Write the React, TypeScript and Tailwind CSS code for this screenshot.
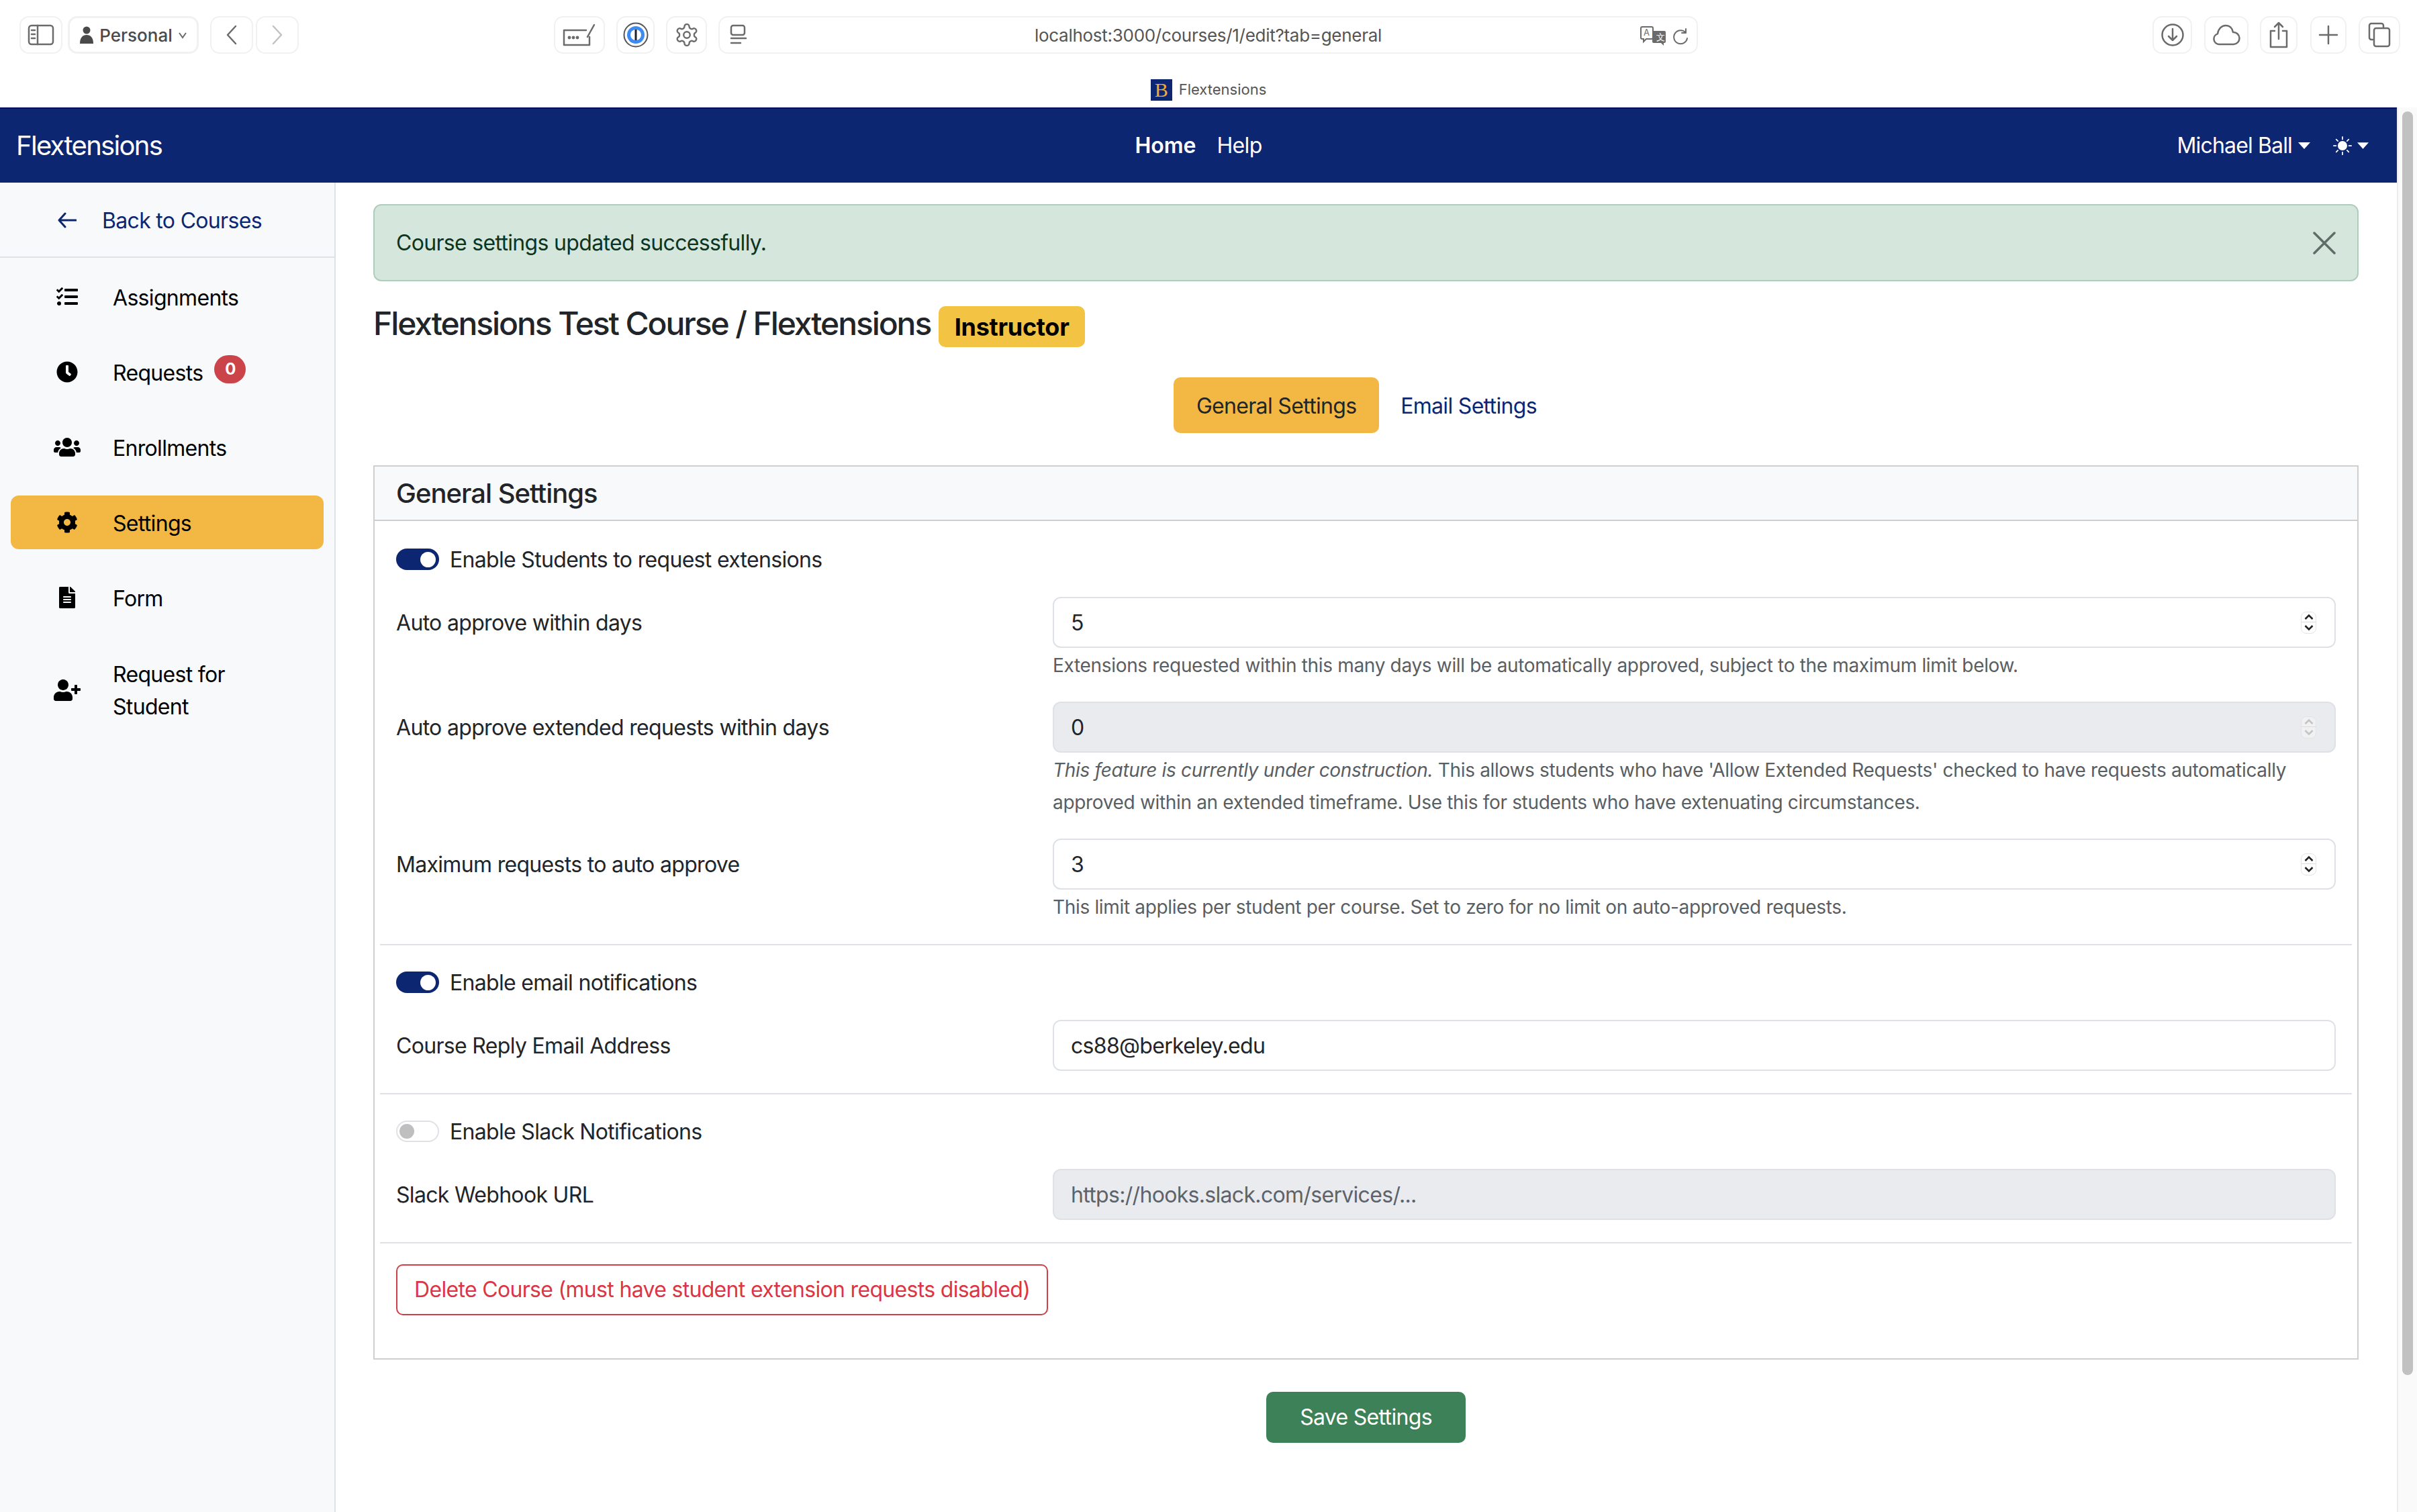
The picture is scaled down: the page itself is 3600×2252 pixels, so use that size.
import React from "react";
import { FaTasks, FaClock, FaUsers, FaCog, FaFileAlt, FaUserPlus } from "react-icons/fa";
import { BsSunFill } from "react-icons/bs";

const stroke = { fill: "none", stroke: "#6b6b6b", strokeWidth: 2.5, strokeLinecap: "round" as const, strokeLinejoin: "round" as const };

function ChromeBtn({ className, children }: { className: string; children?: React.ReactNode }) {
  return (
    <div className={"h-[56px] shrink-0 rounded-[14px] border-2 border-[#f1f1f1] flex items-center justify-center tracking-normal " + className}>
      {children}
    </div>
  );
}

function Toggle({ on, className = "" }: { on?: boolean; className?: string }) {
  return on ? (
    <span className={"w-[64px] h-[32px] rounded-full bg-[#0c2672] flex items-center justify-end pr-[5px] shrink-0 " + className}>
      <span className="w-[23px] h-[23px] rounded-full bg-white" />
    </span>
  ) : (
    <span className={"w-[64px] h-[32px] rounded-full bg-white border-2 border-[#dee2e6] flex items-center pl-[3px] shrink-0 " + className}>
      <span className="w-[22px] h-[22px] rounded-full bg-[#bfbfbf]" />
    </span>
  );
}

function Spin({ disabled }: { disabled?: boolean }) {
  const c = disabled ? "#c4c4c4" : "#222";
  return (
    <span className={"w-[23px] h-[33px] rounded-[8px] border border-[#e4e4e4] flex flex-col items-center overflow-hidden " + (disabled ? "bg-[#f1f1f3]" : "bg-white")}>
      <span className="h-[16px] w-full border-b border-[#dcdcdc] flex items-center justify-center">
        <svg width="14" height="10" viewBox="0 0 14 10"><path d="M1.5 8L7 2.5 12.5 8" fill="none" stroke={c} strokeWidth="2.6" /></svg>
      </span>
      <span className="h-[16px] w-full flex items-center justify-center">
        <svg width="14" height="10" viewBox="0 0 14 10"><path d="M1.5 2L7 7.5 12.5 2" fill="none" stroke={c} strokeWidth="2.6" /></svg>
      </span>
    </span>
  );
}

function Field({ label, value, disabled, spin, className = "", muted }: { label: string; value: string; disabled?: boolean; spin?: boolean; className?: string; muted?: boolean }) {
  return (
    <div className={"flex items-center " + className}>
      <div className="w-[978px] shrink-0 text-[32px] leading-[48px] text-[#212529] pt-[1px]">{label}</div>
      <div className={"flex-1 h-[76px] rounded-[12px] border-2 border-[#dee2e6] flex items-center justify-between pl-[25px] pr-[27px] text-[32px] " + (disabled ? "bg-[#e9ebef] " : "bg-white ") + (muted ? "text-[#5c636a]" : "text-[#212529]")}>
        <span className="pt-[1px]">{value}</span>
        {spin && <Spin disabled={disabled} />}
      </div>
    </div>
  );
}

function Help({ children, className = "" }: { children: React.ReactNode; className?: string }) {
  return <div className={"ml-[978px] mt-[2px] text-[28px] leading-[48px] tracking-[-0.33px] text-[#595e63] " + className}>{children}</div>;
}

function Divider({ className = "" }: { className?: string }) {
  return <div className={"h-[2px] bg-[#dee2e6] -mx-[24px] " + className} />;
}

function ToggleRow({ on, label, className = "" }: { on?: boolean; label: string; className?: string }) {
  return (
    <div className={"flex items-center h-[32px] gap-[16px] text-[32px] text-[#212529] " + className}>
      <Toggle on={on} />
      <span className="pt-[1px]">{label}</span>
    </div>
  );
}

function SideItem({ icon, active, children }: { icon: React.ReactNode; active?: boolean; children: React.ReactNode }) {
  return (
    <div className={"flex items-center min-h-[80px] mx-[16px] rounded-[12px] pr-[32px] text-[32px] leading-[48px] text-black " + (active ? "bg-[#f2b843]" : "")}>
      <span className="ml-[64px] w-[40px] mr-[48px] flex justify-center shrink-0 text-[32px]">{icon}</span>
      <span className="pt-[3px]">{children}</span>
    </div>
  );
}

export default function App() {
  return (
    <div className="w-[3600px] h-[2252px] overflow-hidden flex flex-col bg-white font-['Inter',sans-serif] text-[#212529] tracking-[-0.68px]">
      {/* Browser chrome */}
      <div className="h-[160px] shrink-0 bg-white pt-[24px]">
        <div className="flex items-center h-[56px]">
          <ChromeBtn className="ml-[29px] w-[64px]">
            <svg width="40" height="36" viewBox="0 0 40 36" {...stroke}><rect x="2" y="4" width="36" height="28" rx="4" /><path d="M15 4v28M6 11h5M6 17h5M6 23h5" /></svg>
          </ChromeBtn>
          <ChromeBtn className="ml-[8px] w-[195px] border-[#d4d4d4] border-[3px] gap-[8px] text-[26px] font-medium text-[#4a4a4a]">
            <svg width="22" height="28" viewBox="0 0 22 28"><circle cx="11" cy="7" r="5.5" fill="#4a4a4a" /><path d="M1 27c0-9 4-13 10-13s10 4 10 13z" fill="#4a4a4a" /></svg>
            <span>Personal</span>
            <svg width="14" height="14" viewBox="0 0 14 14" fill="none" stroke="#6b6b6b" strokeWidth="2"><path d="M2 4l5 7 5-7" /></svg>
          </ChromeBtn>
          <ChromeBtn className="ml-[17px] w-[64px]">
            <svg width="22" height="30" viewBox="0 0 22 30" {...stroke}><path d="M17 2L5 15l12 13" /></svg>
          </ChromeBtn>
          <ChromeBtn className="ml-[4px] w-[64px]">
            <svg width="22" height="30" viewBox="0 0 22 30" {...stroke} stroke="#c2c2c2"><path d="M5 2l12 13L5 28" /></svg>
          </ChromeBtn>
          <ChromeBtn className="ml-[380px] w-[76px]">
            <svg width="52" height="34" viewBox="0 0 52 34" {...stroke}><path d="M36 10H3v22h38V20" /><path d="M38 20L48 2" /><circle cx="11" cy="21" r="1.2" /><circle cx="17" cy="21" r="1.2" /><circle cx="23" cy="21" r="1.2" /></svg>
          </ChromeBtn>
          <ChromeBtn className="ml-[17px] w-[57px]">
            <svg width="38" height="38" viewBox="0 0 38 38"><circle cx="19" cy="19" r="17.5" fill="#fff" stroke="#555" strokeWidth="2" /><circle cx="19" cy="19" r="13" fill="#3d8bf0" /><circle cx="19" cy="19" r="8" fill="#fff" /><rect x="17.5" y="11" width="3" height="16" fill="#222" /></svg>
          </ChromeBtn>
          <ChromeBtn className="ml-[17px] w-[61px]">
            <CogOutline />
          </ChromeBtn>
          <ChromeBtn className="ml-[17px] w-[1459px] border-[#e2e2e2] relative justify-center">
            <svg className="absolute left-[14px] top-[10px]" width="28" height="34" viewBox="0 0 28 34" {...stroke}><rect x="3" y="2" width="20" height="14" rx="3" /><path d="M3 21h22M3 28h14" /></svg>
            <span className="text-[26px] text-[#555] tracking-[-0.28px]">localhost:3000/courses/1/edit?tab=general</span>
            <svg className="absolute right-[44px] top-[12px]" width="40" height="30" viewBox="0 0 40 30"><path d="M3 2h14a2 2 0 012 2v14a2 2 0 01-2 2H9l-4 4v-4H3a2 2 0 01-2-2V4a2 2 0 012-2z" fill="#fff" stroke="#6b6b6b" strokeWidth="2" /><path d="M20 8h16a2 2 0 012 2v14a2 2 0 01-2 2h-1v4l-4-4H20a2 2 0 01-2-2V10a2 2 0 012-2z" fill="#6b6b6b" /><text x="5" y="15" fontSize="13" fill="#6b6b6b" fontFamily="Inter">A</text><text x="24" y="22" fontSize="13" fill="#fff" fontFamily="Inter">文</text></svg>
            <svg className="absolute right-[10px] top-[14px]" width="28" height="28" viewBox="0 0 28 28" {...stroke} strokeWidth="2"><path d="M22 9a10 10 0 10 2 8M22 3v6h-6" /></svg>
          </ChromeBtn>
          <ChromeBtn className="ml-[677px] w-[59px]">
            <svg width="36" height="36" viewBox="0 0 36 36" {...stroke}><circle cx="18" cy="18" r="15.5" /><path d="M18 9v17M12 20l6 6 6-6" /></svg>
          </ChromeBtn>
          <ChromeBtn className="ml-[18px] w-[66px]">
            <svg width="44" height="34" viewBox="0 0 44 34" {...stroke}><path d="M11 31a8 8 0 01-2-15.6C10 8 15 3 21 3c6 0 10 4 11 10a9 9 0 011 18z" /></svg>
          </ChromeBtn>
          <ChromeBtn className="ml-[17px] w-[56px]">
            <svg width="32" height="40" viewBox="0 0 32 40" {...stroke}><path d="M10 14H4v24h24V14h-6M16 26V2M10 8l6-6 6 6" /></svg>
          </ChromeBtn>
          <ChromeBtn className="ml-[19px] w-[54px]">
            <svg width="30" height="30" viewBox="0 0 30 30" {...stroke}><path d="M15 2v26M2 15h26" /></svg>
          </ChromeBtn>
          <ChromeBtn className="ml-[18px] w-[62px]">
            <svg width="36" height="38" viewBox="0 0 36 38" {...stroke}><path d="M8 26H6a3 3 0 01-3-3V5a3 3 0 013-3h15a3 3 0 013 3v3" /><rect x="10" y="9" width="23" height="27" rx="3" /></svg>
          </ChromeBtn>
        </div>
        <div className="mt-[37px] flex items-center justify-center gap-[10px] tracking-normal">
          <span className="w-[32px] h-[32px] bg-[#0c2672] flex items-center justify-center text-[#e9ae35] text-[30px] leading-none font-['Liberation_Serif',serif]">B</span>
          <span className="text-[22px] text-[#555]">Flextensions</span>
        </div>
      </div>

      <div className="flex-1 flex min-h-0">
        <div className="flex-1 flex flex-col min-w-0">
          {/* Navbar */}
          <div className="h-[112px] shrink-0 bg-[#0c2672] border-t-2 border-[#030f5a] grid grid-cols-3 items-center text-white text-[32px]">
            <div className="pl-[24px] text-[40px] tracking-[-1.7px]">Flextensions</div>
            <div className="flex justify-center gap-[31px]">
              <span className="font-semibold tracking-normal">Home</span>
              <span>Help</span>
            </div>
            <div className="flex justify-end items-center pr-[42px]">
              <span className="tracking-[-0.85px]">Michael Ball</span>
              <svg className="ml-[9px]" width="18" height="10" viewBox="0 0 18 10"><path d="M0 0h18L9 10z" fill="#fff" /></svg>
              <BsSunFill className="ml-[34px] text-[28px]" />
              <svg className="ml-[8px]" width="17" height="10" viewBox="0 0 18 10"><path d="M0 0h18L9 10z" fill="#fff" /></svg>
            </div>
          </div>

          <div className="flex-1 flex min-h-0">
            {/* Sidebar */}
            <div className="w-[500px] shrink-0 bg-[#f8f9fa] border-r-2 border-[#dee2e6]">
              <div className="h-[112px] border-b-2 border-[#dee2e6] flex items-center text-[#0c2672] text-[32px] pt-[2px]">
                <svg className="ml-[86px] mr-[38px]" width="28" height="24" viewBox="0 0 28 24" fill="none" stroke="#0c2672" strokeWidth="3" strokeLinecap="round" strokeLinejoin="round"><path d="M27 12H2M11 2L2 12l9 10" /></svg>
                <span className="pt-[1px]">Back to Courses</span>
              </div>
              <div className="flex flex-col gap-[32px] pt-[18px]">
                <SideItem icon={<FaTasks />}>Assignments</SideItem>
                <SideItem icon={<FaClock />}>
                  <span className="flex items-center">
                    Requests
                    <span className="ml-[17px] -mt-[11px] w-[47px] h-[42px] rounded-full bg-[#cb444a] text-white text-[24px] font-bold flex items-center justify-center">0</span>
                  </span>
                </SideItem>
                <SideItem icon={<FaUsers className="text-[40px]" />}>Enrollments</SideItem>
                <SideItem active icon={<FaCog />}>Settings</SideItem>
                <SideItem icon={<FaFileAlt />}>Form</SideItem>
                <SideItem icon={<FaUserPlus className="text-[40px]" />}>
                  <span className="block py-[16px]">Request for Student</span>
                </SideItem>
              </div>
            </div>

            {/* Main */}
            <div className="flex-1 pl-[56px] pr-[57px] pt-[32px] min-w-0">
              <div className="h-[115px] rounded-[12px] bg-[#d5e6dd] border-2 border-[#aecdbd] flex items-center justify-between pl-[32px] pr-[32px] text-[32px] text-[#0c3521]">
                <span className="pt-[1px]">Course settings updated successfully.</span>
                <svg width="34" height="34" viewBox="0 0 34 34" fill="none" stroke="#5f6d66" strokeWidth="3.5" strokeLinecap="round"><path d="M2 2l30 30M32 2L2 32" /></svg>
              </div>

              <div className="mt-[37px] h-[61px] flex items-center">
                <h1 className="text-[48px] font-medium text-[#212529] leading-none -mt-[9px] tracking-[-2.1px]">Flextensions Test Course / Flextensions</h1>
                <span className="ml-[12px] h-[61px] w-[218px] rounded-[10px] bg-[#f3c343] flex items-center justify-center text-[36px] font-bold text-black tracking-[-0.3px]">Instructor</span>
              </div>

              <div className="mt-[45px] flex justify-center items-center h-[83px] pr-[32px]">
                <span className="h-[83px] w-[306px] rounded-[10px] bg-[#f2b843] flex items-center justify-center text-[32px] text-[#212529] pt-[3px]">General Settings</span>
                <span className="ml-[32px] text-[32px] text-[#0c2672] pt-[3px]">Email Settings</span>
              </div>

              <div className="mt-[48px] border-2 border-[#cfcfcf] h-[1332px]">
                <div className="h-[81px] bg-[#f8f9fa] border-b-2 border-[#cfcfcf] flex items-center pl-[32px] text-[40px] font-medium text-[#212529] tracking-[-1px]">General Settings</div>
                <div className="px-[32px] pt-[41px]">
                  <ToggleRow on label="Enable Students to request extensions" />
                  <Field className="mt-[40px]" label="Auto approve within days" value="5" spin />
                  <Help>Extensions requested within this many days will be automatically approved, subject to the maximum limit below.</Help>
                  <Field className="mt-[30px]" label="Auto approve extended requests within days" value="0" disabled spin />
                  <Help>
                    <em>This feature is currently under construction.</em> This allows students who have 'Allow Extended Requests' checked to have requests automatically approved within an extended timeframe. Use this for students who have extenuating circumstances.
                  </Help>
                  <Field className="mt-[30px]" label="Maximum requests to auto approve" value="3" spin />
                  <Help>This limit applies per student per course. Set to zero for no limit on auto-approved requests.</Help>
                  <Divider className="mt-[31px]" />
                  <ToggleRow on label="Enable email notifications" className="mt-[39px]" />
                  <Field className="mt-[40px]" label="Course Reply Email Address" value="cs88@berkeley.edu" />
                  <Divider className="mt-[33px]" />
                  <ToggleRow label="Enable Slack Notifications" className="mt-[39px]" />
                  <Field className="mt-[40px]" label="Slack Webhook URL" value="https://hooks.slack.com/services/..." disabled muted />
                  <Divider className="mt-[33px]" />
                  <div className="mt-[31px] inline-flex items-center h-[76px] px-[25px] rounded-[10px] border-2 border-[#cf3f47] text-[32px] text-[#dc3545]">Delete Course (must have student extension requests disabled)</div>
                </div>
              </div>

              <div className="mt-[48px] flex justify-center">
                <span className="h-[76px] w-[297px] rounded-[10px] bg-[#3c8157] text-white text-[32px] flex items-center justify-center">Save Settings</span>
              </div>
            </div>
          </div>
        </div>

        {/* Scrollbar */}
        <div className="w-[30px] shrink-0 bg-[#fafafa] border-l-2 border-[#ececec] pt-[6px] pl-[6px]">
          <div className="w-[16px] h-[1882px] rounded-full bg-[#c1c1c1]" />
        </div>
      </div>
    </div>
  );
}

function CogOutline() {
  return (
    <svg width="38" height="38" viewBox="0 0 24 24" fill="none" stroke="#6b6b6b" strokeWidth="1.5" strokeLinecap="round" strokeLinejoin="round">
      <path d="M12.22 2h-.44a2 2 0 0 0-2 2v.18a2 2 0 0 1-1 1.73l-.43.25a2 2 0 0 1-2 0l-.15-.08a2 2 0 0 0-2.73.73l-.22.38a2 2 0 0 0 .73 2.73l.15.1a2 2 0 0 1 1 1.72v.51a2 2 0 0 1-1 1.74l-.15.09a2 2 0 0 0-.73 2.73l.22.38a2 2 0 0 0 2.73.73l.15-.08a2 2 0 0 1 2 0l.43.25a2 2 0 0 1 1 1.73V20a2 2 0 0 0 2 2h.44a2 2 0 0 0 2-2v-.18a2 2 0 0 1 1-1.73l.43-.25a2 2 0 0 1 2 0l.15.08a2 2 0 0 0 2.73-.73l.22-.39a2 2 0 0 0-.73-2.73l-.15-.08a2 2 0 0 1-1-1.74v-.5a2 2 0 0 1 1-1.74l.15-.09a2 2 0 0 0 .73-2.73l-.22-.38a2 2 0 0 0-2.73-.73l-.15.08a2 2 0 0 1-2 0l-.43-.25a2 2 0 0 1-1-1.73V4a2 2 0 0 0-2-2z" />
      <circle cx="12" cy="12" r="3" />
    </svg>
  );
}
